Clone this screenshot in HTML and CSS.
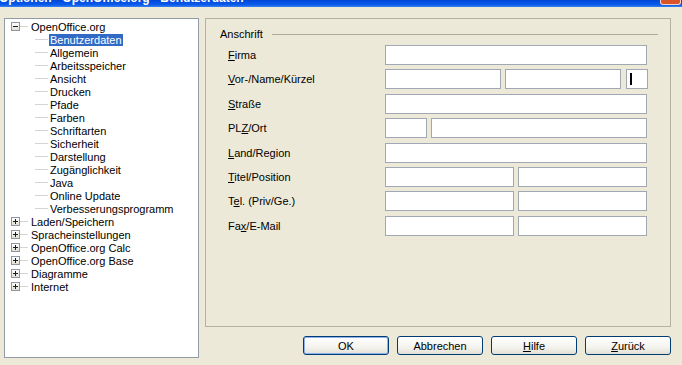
FILE: index.html
```html
<!DOCTYPE html>
<html lang="de">
<head>
<meta charset="UTF-8" />
<title>Optionen - OpenOffice.org - Benutzerdaten</title>
<link rel="stylesheet" href="styles.css">
</head>
<body>

<div class="titlebar">
  <span class="title">Optionen - OpenOffice.org - Benutzerdaten</span>
  <span class="close"></span>
</div>

<div class="dialog">
  <div class="tree">
    <div class="node"><span class="toggle"></span><span class="branch"></span><span class="label">OpenOffice.org</span></div>
    <div class="node child"><span class="branch"></span><span class="label selected">Benutzerdaten</span></div>
    <div class="node child"><span class="branch"></span><span class="label">Allgemein</span></div>
    <div class="node child"><span class="branch"></span><span class="label">Arbeitsspeicher</span></div>
    <div class="node child"><span class="branch"></span><span class="label">Ansicht</span></div>
    <div class="node child"><span class="branch"></span><span class="label">Drucken</span></div>
    <div class="node child"><span class="branch"></span><span class="label">Pfade</span></div>
    <div class="node child"><span class="branch"></span><span class="label">Farben</span></div>
    <div class="node child"><span class="branch"></span><span class="label">Schriftarten</span></div>
    <div class="node child"><span class="branch"></span><span class="label">Sicherheit</span></div>
    <div class="node child"><span class="branch"></span><span class="label">Darstellung</span></div>
    <div class="node child"><span class="branch"></span><span class="label">Zugänglichkeit</span></div>
    <div class="node child"><span class="branch"></span><span class="label">Java</span></div>
    <div class="node child"><span class="branch"></span><span class="label">Online Update</span></div>
    <div class="node child"><span class="branch"></span><span class="label">Verbesserungsprogramm</span></div>
    <div class="node"><span class="toggle plus"></span><span class="branch"></span><span class="label">Laden/Speichern</span></div>
    <div class="node"><span class="toggle plus"></span><span class="branch"></span><span class="label">Spracheinstellungen</span></div>
    <div class="node"><span class="toggle plus"></span><span class="branch"></span><span class="label">OpenOffice.org Calc</span></div>
    <div class="node"><span class="toggle plus"></span><span class="branch"></span><span class="label">OpenOffice.org Base</span></div>
    <div class="node"><span class="toggle plus"></span><span class="branch"></span><span class="label">Diagramme</span></div>
    <div class="node"><span class="toggle plus"></span><span class="branch"></span><span class="label">Internet</span></div>
  </div>

  <div class="rechts">
    <div class="panel">
      <div class="legend">
        <span>Anschrift</span>
        <span class="linie"></span>
      </div>

      <div class="formular">
        <label><u>F</u>irma</label>
        <div class="felder"><div class="field"></div></div>

        <label><u>V</u>or-/Name/Kürzel</label>
        <div class="felder">
          <div class="field w116"></div>
          <div class="field w116"></div>
          <div class="field kurz"><span class="caret"></span></div>
        </div>

        <label><u>S</u>traße</label>
        <div class="felder"><div class="field"></div></div>

        <label>PL<u>Z</u>/Ort</label>
        <div class="felder">
          <div class="field w42"></div>
          <div class="field"></div>
        </div>

        <label><u>L</u>and/Region</label>
        <div class="felder"><div class="field"></div></div>

        <label><u>T</u>itel/Position</label>
        <div class="felder">
          <div class="field"></div>
          <div class="field"></div>
        </div>

        <label>T<u>e</u>l. (Priv/Ge.)</label>
        <div class="felder">
          <div class="field"></div>
          <div class="field"></div>
        </div>

        <label>Fa<u>x</u>/E-Mail</label>
        <div class="felder">
          <div class="field"></div>
          <div class="field"></div>
        </div>
      </div>
    </div>

    <div class="buttons">
      <button class="default">OK</button>
      <button>Abbrechen</button>
      <button><u>H</u>ilfe</button>
      <button><u>Z</u>urück</button>
    </div>
  </div>
</div>

</body>
</html>
```

FILE: styles.css
```css
body {
  margin: 0;
  width: 682px;
  height: 365px;
  overflow: hidden;
  background: #ece9d8;
  font-family: "Liberation Sans", Arial, sans-serif;
  font-size: 11px;
  color: #000;
}

/* Titelleiste (nur unterer Rand sichtbar) */
.titlebar {
  height: 7px;
  display: flex;
  justify-content: space-between;
  overflow: hidden;
  background: linear-gradient(#0046d8, #0a5cec 70%, #3b82f0);
}
.title {
  color: #fff;
  font-weight: bold;
  font-size: 12px;
  line-height: 14px;
  margin-top: -9px;
  margin-left: -1px;
  white-space: nowrap;
}
.close {
  width: 19px;
  height: 4px;
  margin-right: 1px;
  background: #d9542b;
  border: 1px solid #f4d2c4;
  border-top: none;
  border-radius: 0 0 3px 3px;
}

.dialog {
  display: flex;
  gap: 6px;
  padding: 11px 11px 0 4px;
}

/* Baum links */
.tree {
  width: 195px;
  height: 340px;
  box-sizing: border-box;
  border: 1px solid #939ca6;
  background: #fff;
  padding-top: 1px;
}
.node {
  height: 13px;
  display: flex;
  align-items: center;
  padding-left: 6px;
  white-space: nowrap;
}
.node.child {
  padding-left: 30px;
}
.toggle {
  flex: none;
  width: 9px;
  height: 9px;
  box-sizing: border-box;
  border: 1px solid #8c97a3;
  background: linear-gradient(#fff, #e2dfd3);
  position: relative;
}
.toggle::before {
  content: '';
  position: absolute;
  left: 1px;
  top: 3px;
  width: 5px;
  height: 1px;
  background: #1c1c1c;
}
.toggle.plus::after {
  content: '';
  position: absolute;
  left: 3px;
  top: 1px;
  width: 1px;
  height: 5px;
  background: #1c1c1c;
}
.branch {
  flex: none;
  width: 8px;
  height: 0;
  border-top: 1px solid #d4d4d4;
  margin-right: 2px;
}
.node.child .branch {
  width: 13px;
  margin-right: 1px;
}
.label {
  line-height: 12px;
  padding: 0 1px;
}
.label.selected {
  background: #316ac5;
  color: #fff;
}

/* rechte Seite */
.rechts {
  width: 466px;
  display: flex;
  flex-direction: column;
}
.panel {
  height: 309px;
  box-sizing: border-box;
  border: 1px solid #b5b2a3;
  padding: 9px 12px 0 14px;
}
.legend {
  display: flex;
  align-items: center;
  gap: 9px;
  line-height: 13px;
}
.linie {
  flex: 1;
  border-top: 1px solid #aeab9d;
}
.formular {
  display: grid;
  grid-template-columns: 157px 262px;
  row-gap: 4.4px;
  margin: 4px 0 0 8px;
}
.formular label {
  height: 20px;
  line-height: 20px;
}
.felder {
  display: flex;
  gap: 4px;
}
.field {
  flex: 1;
  height: 20px;
  box-sizing: border-box;
  background: #fff;
  border: 1px solid #a0a8b3;
}
.field.w116 {
  flex: none;
  width: 116px;
}
.field.w42 {
  flex: none;
  width: 42px;
}
.field.kurz {
  flex: none;
  width: 22px;
  margin-left: 1px;
  display: flex;
  align-items: center;
  padding-left: 3px;
}
.caret {
  width: 2px;
  height: 12px;
  background: #000;
}

/* Schaltflächen */
.buttons {
  display: flex;
  justify-content: flex-end;
  gap: 8px;
  margin: 9px 0 0 0;
}
.buttons button {
  width: 86px;
  height: 19px;
  padding: 0;
  font-family: "Liberation Sans", Arial, sans-serif;
  font-size: 11px;
  color: #000;
  border: 1px solid #003c74;
  border-radius: 3px;
  background: linear-gradient(#ffffff, #f4f3ee 60%, #e3e0d5);
}
.buttons button.default {
  box-shadow: inset 0 0 0 1px #8fb1ee;
}
```
